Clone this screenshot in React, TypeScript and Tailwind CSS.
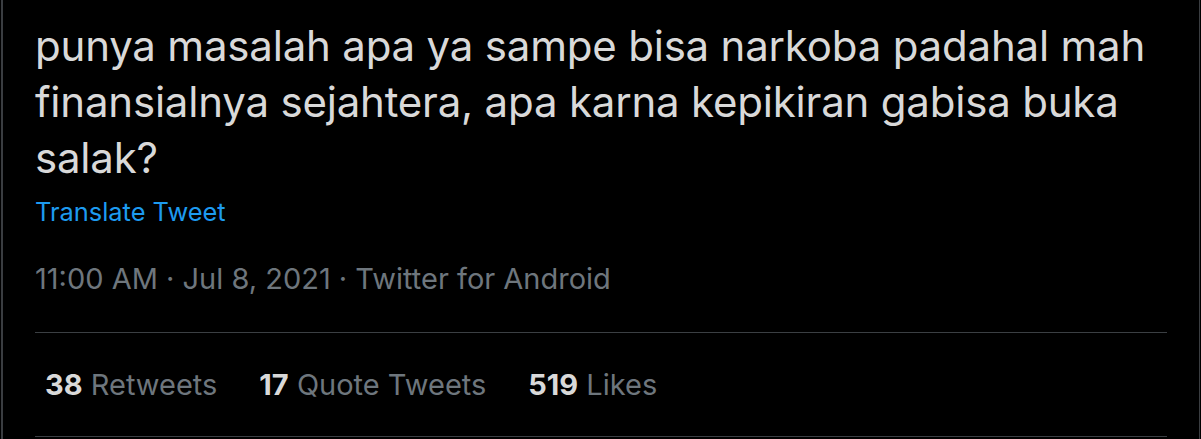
import React from "react";

export default function App() {
  return (
    <div className="w-[1201px] h-[439px] bg-black pl-[1px] pr-[1px] overflow-hidden" style={{ fontFamily: "Inter, 'Noto Sans', sans-serif" }}>
      <div className="h-full border-l-2 border-r border-[#3a3d41] pl-[32px] pr-[32px] pt-[18px]">
        <div className="text-[42px] leading-[56px] text-[#d9d9d9] tracking-[-0.2px]">
          punya masalah apa ya sampe bisa narkoba padahal mah finansialnya sejahtera, apa karna kepikiran gabisa buka salak?
        </div>
        <div className="mt-[12px] text-[25.4px] leading-[28px] text-[#1d9bf0]">Translate Tweet</div>
        <div className="mt-[36px] text-[29px] leading-[34px] text-[#6e767d]">
          11:00 AM · Jul 8, 2021 · Twitter for Android
        </div>
        <div className="mt-[36px] border-t border-[#3b3f43] h-[105px] border-b flex items-center pl-[10px] gap-[42px] text-[29px]">
          <span><span className="font-bold text-[#d9d9d9]">38</span> <span className="text-[#6e767d]">Retweets</span></span>
          <span><span className="font-bold text-[#d9d9d9]">17</span> <span className="text-[#6e767d]">Quote Tweets</span></span>
          <span><span className="font-bold text-[#d9d9d9]">519</span> <span className="text-[#6e767d]">Likes</span></span>
        </div>
      </div>
    </div>
  );
}
